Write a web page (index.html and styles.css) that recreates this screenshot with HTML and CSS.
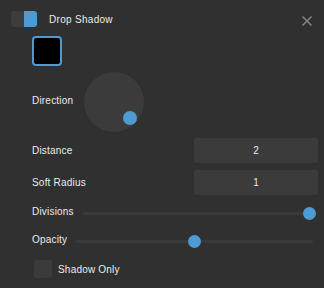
FILE: index.html
```html
<!DOCTYPE html>
<html>
<head>
<meta charset="utf-8">
<link rel="stylesheet" href="styles.css">
</head>
<body>
<div class="panel">
  <div class="header">
    <div class="toggle"><span class="toggle-off"></span><span class="toggle-on"></span></div>
    <span class="title">Drop Shadow</span>
    <svg class="close" width="10" height="10" viewBox="0 0 10 10"><path d="M0.5 0.5 L9.5 9.5 M9.5 0.5 L0.5 9.5" stroke="#8a8a8a" stroke-width="1.4"/></svg>
  </div>
  <div class="swatch"></div>
  <div class="row dir-row">
    <span class="label">Direction</span>
    <div class="dial"><span class="dial-knob"></span></div>
  </div>
  <div class="row input-row">
    <span class="label">Distance</span>
    <div class="field">2</div>
  </div>
  <div class="row input-row gap">
    <span class="label">Soft Radius</span>
    <div class="field">1</div>
  </div>
  <div class="row slider-row divisions">
    <span class="label">Divisions</span>
    <div class="track"><span class="knob" style="left: 98.4%"></span></div>
  </div>
  <div class="row slider-row opacity">
    <span class="label">Opacity</span>
    <div class="track"><span class="knob" style="left: 49.9%"></span></div>
  </div>
  <div class="row check-row">
    <span class="checkbox"></span>
    <span class="label">Shadow Only</span>
  </div>
</div>
</body>
</html>
```
FILE: styles.css
```css
html, body {
  margin: 0;
  padding: 0;
  background: #303030;
}
body {
  width: 324px;
  height: 288px;
  overflow: hidden;
  font-family: "Liberation Sans", Arial, sans-serif;
  font-size: 10px;
  color: #ececec;
}
.panel {
  display: flex;
  flex-direction: column;
  padding: 11px 11px 0 11px;
}
.header {
  display: flex;
  align-items: center;
  height: 16px;
}
.toggle {
  display: flex;
  flex-shrink: 0;
  width: 26px;
  height: 16px;
  border-radius: 3px;
  overflow: hidden;
}
.toggle-off {
  width: 13px;
  background: #3d3d3d;
}
.toggle-on {
  width: 13px;
  background: #4d9bd2;
}
.title {
  margin-left: 12px;
  letter-spacing: 0.3px;
  flex: 1;
}
.close {
  margin-right: 1px;
  margin-top: 3px;
}
.swatch {
  margin-top: 9px;
  margin-left: 21px;
  width: 26px;
  height: 26px;
  background: #000;
  border: 2px solid #4d9bd2;
  border-radius: 4px;
}
.row {
  display: flex;
  align-items: center;
  padding-left: 21px;
}
.label {
  letter-spacing: 0.2px;
  white-space: nowrap;
}
.dir-row {
  margin-top: 6px;
  height: 60px;
}
.dir-row .label {
  width: 52px;
  margin-top: -3px;
}
.dial {
  position: relative;
  flex-shrink: 0;
  width: 60px;
  height: 60px;
  border-radius: 50%;
  background: #3b3b3b;
}
.dial-knob {
  position: absolute;
  left: 45.7px;
  top: 45.7px;
  width: 14px;
  height: 14px;
  margin: -7px 0 0 -7px;
  border-radius: 50%;
  background: #4d9bd2;
}
.input-row {
  margin-top: 6px;
  margin-right: -5px;
  height: 25px;
}
.input-row.gap {
  margin-top: 7px;
}
.input-row .label {
  flex: 1;
}
.field {
  width: 124px;
  height: 25px;
  line-height: 25px;
  text-align: center;
  background: #3b3b3b;
  border-radius: 3px;
}
.slider-row {
  height: 14px;
}
.slider-row.divisions {
  margin-top: 11px;
}
.slider-row.opacity {
  margin-top: 14px;
}
.slider-row .label {
  margin-top: -3px;
}
.divisions .track {
  margin-left: 9px;
}
.opacity .track {
  margin-left: 9px;
}
.track {
  position: relative;
  flex: 1;
  height: 3px;
  background: #3a3a3a;
  border-radius: 2px;
}
.knob {
  position: absolute;
  top: 50%;
  width: 13px;
  height: 13px;
  margin: -6.5px 0 0 -6.5px;
  border-radius: 50%;
  background: #4d9bd2;
}
.check-row {
  margin-top: 12px;
  padding-left: 23px;
}
.checkbox {
  width: 18px;
  height: 18px;
  background: #3b3b3b;
  border-radius: 2px;
  margin-right: 6px;
}
```
